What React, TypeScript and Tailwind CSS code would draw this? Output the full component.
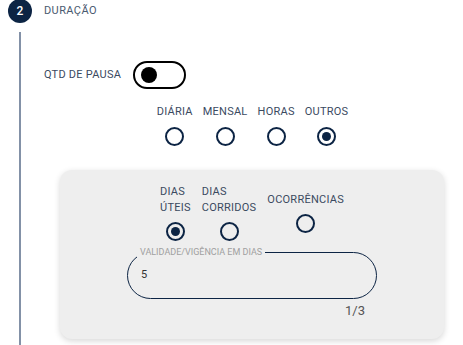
import React from "react";

const NAVY = "border-[#0c2444]";

function Radio({ checked = false }: { checked?: boolean }) {
  return (
    <span
      className={`flex h-[19px] w-[19px] items-center justify-center rounded-full border-[2.5px] ${NAVY}`}
    >
      {checked && <span className="h-[9px] w-[9px] rounded-full bg-[#0c2444]" />}
    </span>
  );
}

function Option({ label, checked }: { label: React.ReactNode; checked?: boolean }) {
  return (
    <div className="flex flex-col items-center gap-[7px]">
      <span className="text-[11px] leading-[16px] tracking-[0.25px] text-[#3b4a5f]">{label}</span>
      <Radio checked={checked} />
    </div>
  );
}

export default function App() {
  return (
    <div
      className="flex h-[345px] w-[463px] flex-col overflow-hidden bg-white"
      style={{ fontFamily: "Roboto, 'Liberation Sans', sans-serif" }}
    >
      {/* step header */}
      <div className="flex h-[22px] items-center gap-3 pl-2">
        <span className="flex h-6 w-6 items-center justify-center rounded-full bg-[#0c2444] text-[12px] font-medium text-white">
          2
        </span>
        <span className="text-[11px] tracking-[0.4px] text-[#4a5a70]">DURAÇÃO</span>
      </div>

      {/* step body */}
      <div className="ml-[19px] mt-[10px] flex-1 border-l-2 border-[#8391a7] pl-[23px] pr-[2px]">
        <div className="mt-[29px] flex h-[28px] items-center gap-3">
          <span className="text-[11px] tracking-[0.25px] text-[#3b4a5f]">QTD DE PAUSA</span>
          <span className="flex h-[28px] w-[53px] items-center rounded-full border-2 border-black">
            <span className="ml-[6px] h-4 w-4 rounded-full bg-black" />
          </span>
        </div>

        <div className="mt-[15px] flex justify-center gap-[10px]">
          <Option label="DIÁRIA" />
          <Option label="MENSAL" />
          <Option label="HORAS" />
          <Option label="OUTROS" checked />
        </div>

        <div className="ml-4 mt-[24px] h-[169px] w-[384px] rounded-xl bg-[#eeeeee] pt-[14px] shadow-[0_2px_6px_rgba(0,0,0,0.16)]">
          <div className="flex items-center justify-center gap-[11px]">
            <div className="flex flex-col items-center gap-[6px]">
              <span className="text-left text-[11px] leading-[16px] tracking-[0.25px] text-[#3b4a5f]">
                DIAS
                <br />
                ÚTEIS
              </span>
              <Radio checked />
            </div>
            <div className="flex flex-col items-center gap-[6px]">
              <span className="text-left text-[11px] leading-[16px] tracking-[0.25px] text-[#3b4a5f]">
                DIAS
                <br />
                CORRIDOS
              </span>
              <Radio />
            </div>
            <div className="flex flex-col items-center gap-[6px]">
              <span className="text-[11px] leading-[16px] tracking-[0.25px] text-[#3b4a5f]">
                OCORRÊNCIAS
              </span>
              <Radio />
            </div>
          </div>

          <div className="relative mx-auto mt-[11px] flex h-[47px] w-[250px] items-center rounded-full border border-[#0c2444] pl-[13px]">
            <span className="absolute left-[9px] top-[-7px] bg-[#eeeeee] px-[3px] text-[9px] leading-[12px] text-[#a0a0a0]">
              VALIDADE/VIGÊNCIA EM DIAS
            </span>
            <span className="text-[11px] text-[#333]">5</span>
          </div>
          <div className="mx-auto mt-[4px] w-[250px] pr-3 text-right text-[13px] leading-[16px] text-[#555]">
            1/3
          </div>
        </div>
      </div>
    </div>
  );
}
